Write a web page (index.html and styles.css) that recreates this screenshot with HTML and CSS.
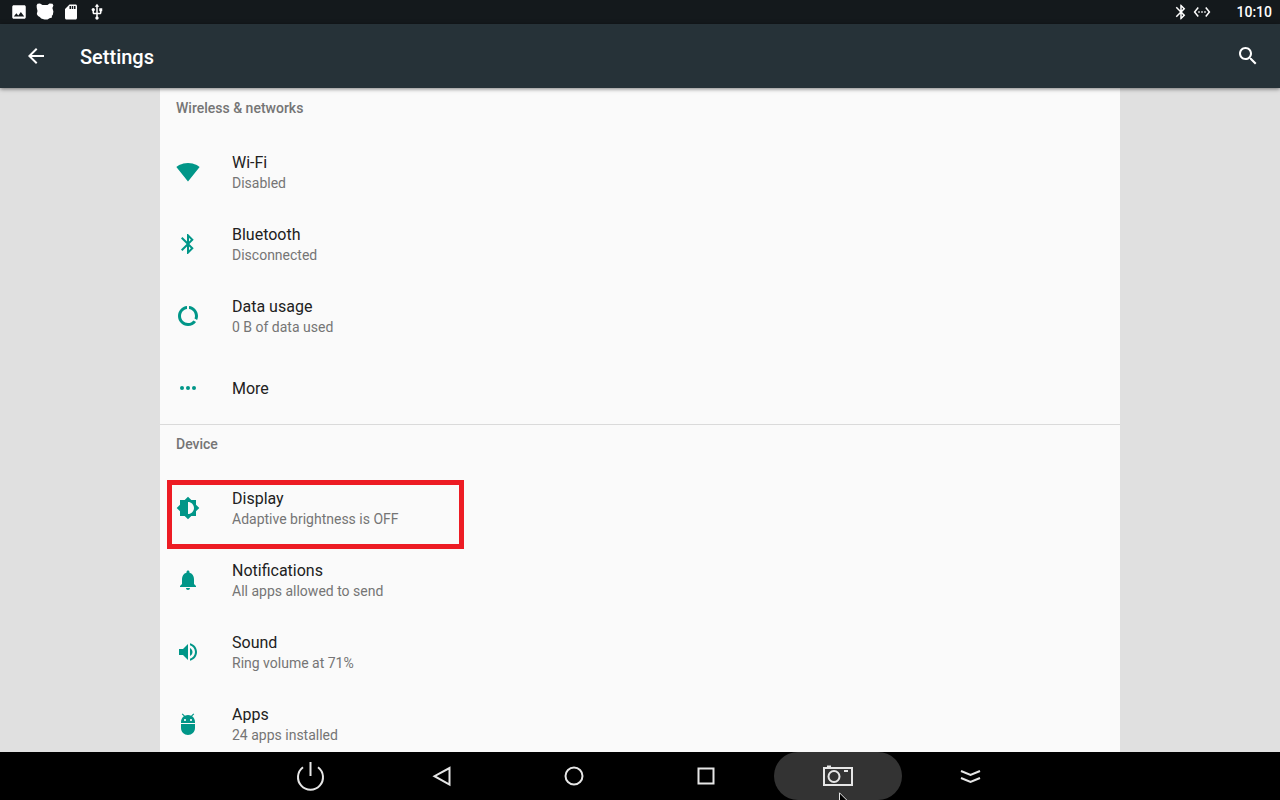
FILE: index.html
```
<!DOCTYPE html>
<html lang="en">
<head>
  <meta charset="UTF-8">
  <meta name="viewport" content="width=device-width, initial-scale=1.0">
  <title>Settings</title>
  <link rel="stylesheet" href="styles.css">
</head>
<body>
  <div class="status-bar">
    <div class="status-left">
      <svg class="status-icon" viewBox="0 0 24 24"><path d="M21 19V5c0-1.100-.9-2-2-2H5c-1.100 0-2 .9-2 2v14c0 1.100.9 2 2 2h14c1.100 0 2-.9 2-2zM8.500 13.500l2.500 3 3.500-4.500 4.500 6H5l3.500-4.500z"/></svg>
      <svg class="status-icon" viewBox="0 0 18 18"><path d="M.6 2.500 1.500.8 4 .6 6.500 2h5L13.500.6l3 .2.900 1.700-1 2.500 1 3.500-.6 3.500-1 .8.200 1.800-2.500.6-2 1.200-3 .2-3.300-1-1.400-1.600L2 13 .8 11 1.500 8 .8 5z"/></svg>
      <svg class="status-icon" viewBox="0 0 24 24"><path d="M18 2h-8L4.020 8 4 20c0 1.100.9 2 2 2h12c1.100 0 2-.9 2-2V4c0-1.100-.9-2-2-2zm-6 6h-2V4h2v4zm3 0h-2V4h2v4zm3 0h-2V4h2v4z"/></svg>
      <svg class="status-icon" viewBox="0 0 24 24"><path d="M15 7v4h1v2h-3V5h2l-3-4-3 4h2v8H8v-2.070c.7-.37 1.200-1.080 1.200-1.930 0-1.210-.99-2.200-2.200-2.200-1.210 0-2.200.99-2.200 2.200 0 .85.5 1.560 1.200 1.930V13c0 1.110.89 2 2 2h3v3.050c-.71.37-1.200 1.100-1.200 1.950 0 1.220.99 2.200 2.200 2.200 1.210 0 2.200-.98 2.200-2.200 0-.85-.49-1.580-1.200-1.950V15h3c1.110 0 2-.89 2-2v-2h1V7h-4z"/></svg>
    </div>
    <div class="status-right">
      <svg class="status-icon" viewBox="0 0 24 24"><path d="M17.710 7.710L12 2h-1v7.590L6.410 5 5 6.410 10.590 12 5 17.590 6.410 19 11 14.410V22h1l5.710-5.710-4.300-4.290 4.300-4.290zM13 5.830l1.880 1.880L13 9.590V5.830zm1.880 10.460L13 18.170v-3.760l1.880 1.880z"/></svg>
      <svg class="status-icon" viewBox="0 0 24 24"><path d="M7.770 6.760L6.230 5.480.82 12l5.410 6.520 1.540-1.280L3.420 12l4.350-5.240zM7 13h2v-2H7v2zm10-2h-2v2h2v-2zm-6 2h2v-2h-2v2zm6.770-7.520l-1.540 1.280L20.580 12l-4.350 5.240 1.540 1.280L23.180 12l-5.410-6.520z"/></svg>
      <span class="clock">10:10</span>
    </div>
  </div>

  <header class="app-bar">
    <button class="icon-button" type="button" aria-label="Back">
      <svg class="icon" viewBox="0 0 24 24"><path d="M20 11H7.830l5.590-5.590L12 4l-8 8 8 8 1.410-1.410L7.830 13H20v-2z"/></svg>
    </button>
    <h1>Settings</h1>
    <button class="icon-button" type="button" aria-label="Search">
      <svg class="icon" viewBox="0 0 24 24"><path d="M15.500 14h-.79l-.28-.27C15.410 12.590 16 11.110 16 9.500 16 5.910 13.090 3 9.500 3S3 5.910 3 9.500 5.910 16 9.500 16c1.610 0 3.090-.59 4.230-1.570l.27.28v.79l5 4.990L20.490 19l-4.990-5zm-6 0C7.010 14 5 11.990 5 9.500S7.010 5 9.500 5 14 7.010 14 9.500 11.990 14 9.500 14z"/></svg>
    </button>
  </header>

  <main>
    <div class="panel">
      <section>
        <h2>Wireless &amp; networks</h2>
        <a class="row" href="#wifi">
          <svg class="icon" viewBox="0 0 24 24"><path d="M12.010 21.490L23.640 7c-.45-.34-4.930-4-11.640-4C5.280 3 .81 6.660.36 7l11.630 14.490.01.01.01-.01z"/></svg>
          <span class="text"><span class="title">Wi-Fi</span><span class="summary">Disabled</span></span>
        </a>
        <a class="row" href="#bluetooth">
          <svg class="icon" viewBox="0 0 24 24"><path d="M17.710 7.710L12 2h-1v7.590L6.410 5 5 6.410 10.590 12 5 17.590 6.410 19 11 14.410V22h1l5.710-5.710-4.300-4.290 4.300-4.290zM13 5.830l1.880 1.880L13 9.590V5.830zm1.880 10.460L13 18.170v-3.760l1.880 1.880z"/></svg>
          <span class="text"><span class="title">Bluetooth</span><span class="summary">Disconnected</span></span>
        </a>
        <a class="row" href="#data-usage">
          <svg class="icon" viewBox="0 0 24 24"><path d="M13 2.050v3.030c3.390.49 6 3.390 6 6.920 0 .9-.18 1.750-.48 2.540l2.600 1.530c.56-1.240.88-2.620.88-4.070 0-5.180-3.950-9.450-9-9.950zM12 19c-3.870 0-7-3.130-7-7 0-3.530 2.610-6.430 6-6.920V2.050c-5.060.5-9 4.760-9 9.950 0 5.520 4.470 10 9.990 10 3.310 0 6.240-1.610 8.060-4.090l-2.600-1.530C16.170 17.980 14.210 19 12 19z"/></svg>
          <span class="text"><span class="title">Data usage</span><span class="summary">0 B of data used</span></span>
        </a>
        <a class="row" href="#more">
          <svg class="icon" viewBox="0 0 24 24"><circle cx="6" cy="12" r="2"/><circle cx="12" cy="12" r="2"/><circle cx="18" cy="12" r="2"/></svg>
          <span class="text"><span class="title">More</span></span>
        </a>
      </section>

      <section>
        <h2>Device</h2>
        <a class="row highlighted" href="#display">
          <svg class="icon" viewBox="0 0 24 24"><path d="M20 15.310L23.310 12 20 8.690V4h-4.690L12 .69 8.690 4H4v4.690L.69 12 4 15.310V20h4.690L12 23.310 15.310 20H20v-4.690zM12 18V6c3.310 0 6 2.690 6 6s-2.690 6-6 6z"/></svg>
          <span class="text"><span class="title">Display</span><span class="summary">Adaptive brightness is OFF</span></span>
        </a>
        <a class="row" href="#notifications">
          <svg class="icon" viewBox="0 0 24 24"><path d="M12 22c1.100 0 2-.9 2-2h-4c0 1.100.89 2 2 2zm6-6v-5c0-3.070-1.640-5.640-4.500-6.320V4c0-.83-.67-1.500-1.500-1.500s-1.500.67-1.500 1.500v.68C7.630 5.360 6 7.920 6 11v5l-2 2v1h16v-1l-2-2z"/></svg>
          <span class="text"><span class="title">Notifications</span><span class="summary">All apps allowed to send</span></span>
        </a>
        <a class="row" href="#sound">
          <svg class="icon" viewBox="0 0 24 24"><path d="M3 9v6h4l5 5V4L7 9H3zm13.500 3c0-1.770-1.020-3.290-2.500-4.030v8.050c1.480-.73 2.500-2.250 2.500-4.020zM14 3.230v2.060c2.890.86 5 3.540 5 6.710s-2.110 5.850-5 6.710v2.060c4.010-.91 7-4.490 7-8.770s-2.990-7.860-7-8.770z"/></svg>
          <span class="text"><span class="title">Sound</span><span class="summary">Ring volume at 71%</span></span>
        </a>
        <a class="row" href="#apps">
          <svg class="icon" viewBox="0 0 24 24"><path d="M5 16c0 3.870 3.130 7 7 7s7-3.130 7-7v-4H5v4zM16.120 4.370l2.100-2.100-.82-.83-2.300 2.310C14.160 3.280 13.120 3 12 3s-2.160.28-3.090.75L6.600 1.440l-.82.83 2.100 2.100C6.140 5.640 5 7.680 5 10v1h14v-1c0-2.320-1.140-4.360-2.880-5.630zM9 9c-.55 0-1-.45-1-1s.45-1 1-1 1 .45 1 1-.45 1-1 1zm6 0c-.55 0-1-.45-1-1s.45-1 1-1 1 .45 1 1-.45 1-1 1z"/></svg>
          <span class="text"><span class="title">Apps</span><span class="summary">24 apps installed</span></span>
        </a>
      </section>
    </div>
  </main>

  <nav class="nav-bar">
    <button class="nav-button" type="button" aria-label="Power">
      <svg viewBox="0 0 32 32"><path d="M9 7.200a12.500 12.500 0 1 0 15 0M16.500 2v14"/></svg>
    </button>
    <button class="nav-button" type="button" aria-label="Back">
      <svg viewBox="0 0 32 32"><path d="M23.500 8v16.500L8.500 16.200z"/></svg>
    </button>
    <button class="nav-button" type="button" aria-label="Home">
      <svg viewBox="0 0 32 32"><circle cx="16" cy="16" r="8.500"/></svg>
    </button>
    <button class="nav-button" type="button" aria-label="Recent apps">
      <svg viewBox="0 0 32 32"><path d="M8.500 8.500h15v15h-15z"/></svg>
    </button>
    <button class="nav-button pressed" type="button" aria-label="Screenshot">
      <svg viewBox="0 0 32 32"><path d="M2 8h28v17H2zM5 6.500h4M22 11h4"/><circle cx="12" cy="16.500" r="5.500"/></svg>
      <svg class="cursor" viewBox="0 0 10 8"><path d="M1.500 12V.8L12 11.300"/></svg>
    </button>
    <button class="nav-button" type="button" aria-label="Hide bar">
      <svg viewBox="0 0 32 32"><path d="M7 11l9.500 4 9.500-4M7 18l9.500 4 9.500-4"/></svg>
    </button>
  </nav>
</body>
</html>
```
FILE: styles.css
```
:root {
  --accent: #009688;
  --panel: #fafafa;
  --text: #212121;
  --muted: #757575;
  --border: #dadada;
}

*,
*::after {
  margin: 0;
  padding: 0;
  box-sizing: border-box;
}

body {
  display: flex;
  flex-direction: column;
  height: 100vh;
  overflow: hidden;
  font-family: Roboto, "Liberation Sans", sans-serif;
  color: var(--text);
  background: #e0e0e0;
}

button {
  border: none;
  background: none;
  color: inherit;
}

svg {
  display: block;
  flex-shrink: 0;
}

/* Status bar */
.status-bar {
  display: flex;
  justify-content: space-between;
  flex-shrink: 0;
  height: 24px;
  padding: 0 8px 0 10px;
  background: #14191c;
  color: #fff;
}

.status-left,
.status-right {
  display: flex;
  align-items: center;
}

.status-left {
  gap: 8px;
}

.status-right {
  gap: 3px;
}

.status-icon {
  width: 18px;
  height: 18px;
  fill: #fff;
}

.clock {
  margin-left: 22px;
  font-size: 14px;
  font-weight: 500;
}

/* App bar */
.app-bar {
  display: flex;
  align-items: center;
  flex-shrink: 0;
  height: 64px;
  padding: 0 8px 0 12px;
  background: #263238;
  color: #fff;
  box-shadow: 0 1px 4px rgba(0, 0, 0, 0.5);
  z-index: 1;
}

.app-bar h1 {
  flex: 1;
  margin-left: 20px;
  padding-top: 2px;
  font-size: 20px;
  line-height: 24px;
  font-weight: 500;
}

.icon-button {
  display: flex;
  align-items: center;
  justify-content: center;
  width: 48px;
  height: 48px;
}

.icon {
  width: 24px;
  height: 24px;
  fill: currentColor;
}

/* Settings list */
main {
  flex: 1;
  min-height: 0;
  padding: 0 160px;
  overflow: hidden;
}

.panel {
  background: var(--panel);
}

section + section {
  border-top: 1px solid var(--border);
}

section h2 {
  height: 48px;
  padding-left: 16px;
  font-size: 14px;
  line-height: 40px;
  font-weight: 500;
  color: var(--muted);
}

section + section h2 {
  height: 47px;
  line-height: 38px;
}

.row {
  position: relative;
  display: flex;
  align-items: center;
  gap: 32px;
  height: 72px;
  padding: 0 16px;
  color: var(--text);
  text-decoration: none;
}

.row .icon {
  fill: var(--accent);
}

.text {
  display: flex;
  flex-direction: column;
  padding-top: 2px;
}

.title {
  font-size: 16px;
  line-height: 20px;
}

.summary {
  font-size: 14px;
  line-height: 20px;
  color: var(--muted);
}

.highlighted::after {
  content: "";
  position: absolute;
  top: 8px;
  left: 7px;
  width: 297px;
  height: 69px;
  border: 5px solid #ed1c24;
  z-index: 1;
}

/* Navigation bar */
.nav-bar {
  display: flex;
  justify-content: center;
  flex-shrink: 0;
  gap: 4px;
  height: 48px;
  background: #000;
}

.nav-button {
  position: relative;
  display: flex;
  align-items: center;
  justify-content: center;
  width: 128px;
  border-radius: 24px;
}

.nav-button svg {
  width: 32px;
  height: 32px;
  fill: none;
  stroke: #e6e6e6;
  stroke-width: 2;
}

.nav-button.pressed {
  background: #333;
}

.nav-button .cursor {
  position: absolute;
  top: 40px;
  left: 64px;
  width: 10px;
  height: 8px;
  fill: #000;
  stroke-width: 1;
}
```
